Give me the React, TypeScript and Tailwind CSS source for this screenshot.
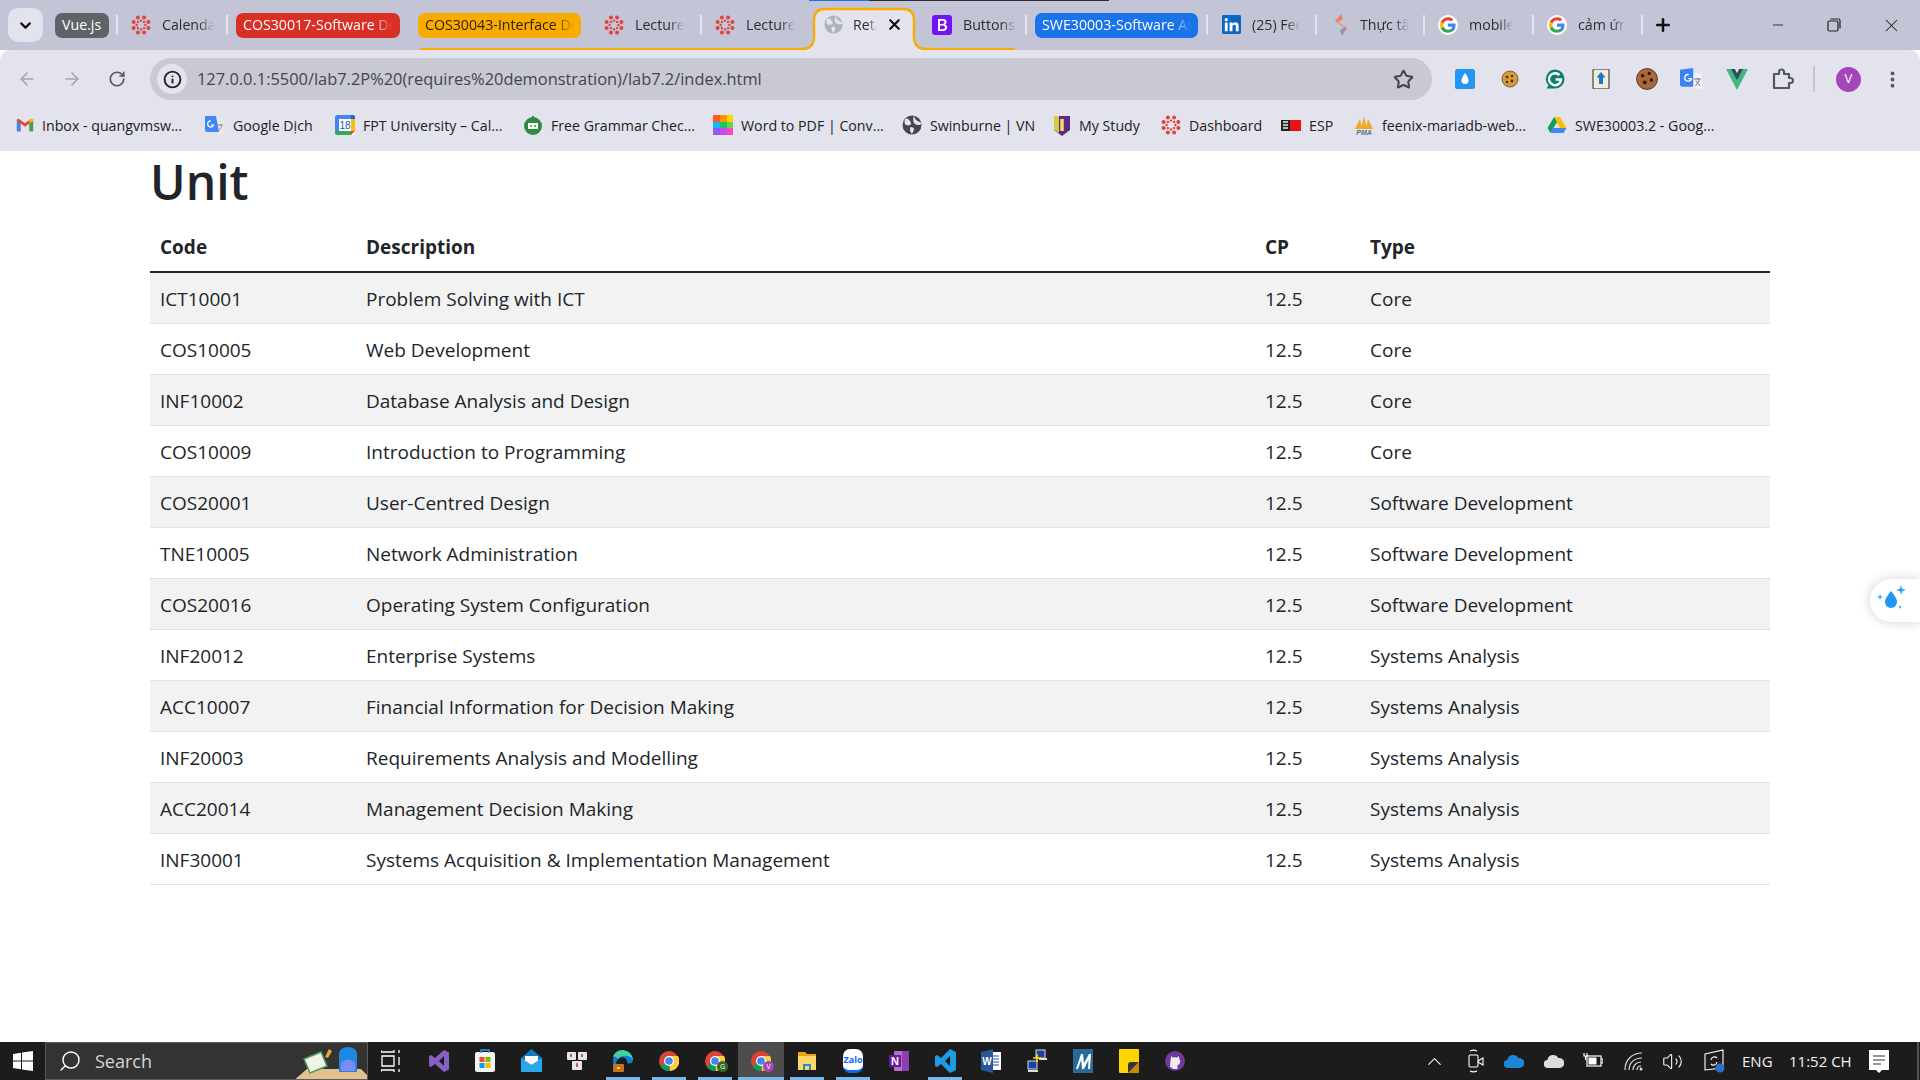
import React from "react";
import { ArrowLeft, ArrowRight, RotateCw, Star, EllipsisVertical, Info, ChevronDown, X, Plus, Minus, Search, ChevronUp, Volume2 } from "lucide-react";

const Box = ({ s = 20, children }: { s?: number; children: React.ReactNode }) => (
  <svg width={s} height={s} viewBox="0 0 20 20" className="shrink-0">{children}</svg>
);

const Canvas = ({ s = 20 }: { s?: number }) => {
  const dots = Array.from({ length: 8 }, (_, i) => (i * Math.PI) / 4 + Math.PI / 8);
  return (
    <Box s={s}>
      {dots.map((a, i) => (
        <circle key={i} cx={10 + 8 * Math.cos(a)} cy={10 + 8 * Math.sin(a)} r={2} fill="#e2403a" />
      ))}
      {dots.map((a, i) => (
        <circle key={"b" + i} cx={10 + 4.4 * Math.cos(a + Math.PI / 8)} cy={10 + 4.4 * Math.sin(a + Math.PI / 8)} r={1.2} fill="#e2403a" />
      ))}
    </Box>
  );
};

const GLogo = () => (
  <Box>
    <circle cx="10" cy="10" r="10" fill="#fff" />
    <g transform="translate(10 10) scale(1.3) translate(-10 -10)">
      <path d="M15.8 10.2c0-.5 0-.9-.1-1.3H10v2.4h3.3c-.2.8-.6 1.4-1.2 1.9v1.5h2c1.1-1.1 1.7-2.6 1.7-4.5z" fill="#4285f4" />
      <path d="M10 16c1.6 0 3-.5 4-1.5l-2-1.5c-.5.4-1.2.6-2 .6-1.6 0-2.9-1-3.4-2.4H4.5v1.6C5.5 14.7 7.6 16 10 16z" fill="#34a853" />
      <path d="M6.6 11.2c-.3-.8-.3-1.6 0-2.4V7.2H4.5c-.8 1.7-.8 3.8 0 5.6z" fill="#fbbc05" />
      <path d="M10 6.4c.9 0 1.7.3 2.3.9L14 5.5C12.9 4.5 11.5 4 10 4 7.6 4 5.5 5.3 4.5 7.2l2.1 1.6C7.1 7.4 8.4 6.4 10 6.4z" fill="#ea4335" />
    </g>
  </Box>
);

const Globe = ({ c = "#aeb1b8", s = 20 }: { c?: string; s?: number }) => (
  <Box s={s}>
    <circle cx="10" cy="10" r="9.5" fill={c} />
    <path d="M3 4c2-1 4 0 5 2s2 3 0 4-3 0-4 0-2-3-1-6zM12 1c1 2 1 3 2 4s3 1 5 3c0 2-1 2-3 2s-3-1-4-2-1-5 0-7zM9 12c2 0 3 1 3 2s-1 3-2 5c-1-1-2-3-2-4s0-3 1-3z" fill="#e2e3ec" />
  </Box>
);

const Chrome = ({ badge }: { badge?: string }) => (
  <span className="relative flex">
    <svg width="20" height="24" viewBox="0 0 20 24">
      <circle cx="10" cy="12" r="10" fill="#db4437" />
      <path d="M10 12 1.400 17a10 10 0 0 0 9.600 5z" fill="#0f9d58" />
      <path d="M10 7h8.900A10 10 0 0 1 11 22z" fill="#ffcd40" />
      <circle cx="10" cy="12" r="5" fill="#fff" />
      <circle cx="10" cy="12" r="3.800" fill="#4285f4" />
    </svg>
    {badge && (
      <span className={"absolute right-[-3px] bottom-[1px] h-[11px] w-[11px] rounded-full text-[7px] leading-[11px] text-center text-white " + (badge === "V" ? "bg-[#a445b8]" : "bg-[#33691e]")}>
        {badge}
      </span>
    )}
  </span>
);

const Sep = ({ cls }: { cls: string }) => <span className={"h-[20px] w-[2px] shrink-0 bg-[#e2e3ec] " + cls} />;

const Chip = ({ cls, text, fade }: { cls: string; text: string; fade?: boolean }) => (
  <div className={"h-[25px] shrink-0 rounded-[7px] px-[7px] text-[14.2px] leading-[24px] overflow-hidden whitespace-nowrap " + cls}>
    <div className={fade ? "overflow-hidden [mask-image:linear-gradient(to_right,black_86%,transparent_100%)]" : ""}>{text}</div>
  </div>
);

const TabT = ({ w, icon, text, cls = "" }: { w: string; icon: React.ReactNode; text: string; cls?: string }) => (
  <div className={"flex shrink-0 items-center gap-[11px] " + w + " " + cls}>
    {icon}
    <div className="flex-1 overflow-hidden whitespace-nowrap text-[14.2px] text-[#2c2d33] [mask-image:linear-gradient(to_right,black_70%,transparent_100%)]">{text}</div>
  </div>
);

const TabStrip = () => (
  <div className="relative flex h-[50px] shrink-0 items-center bg-[#c3c4d6] pl-[8px]">
    <div className="absolute left-[809px] top-0 h-[1px] w-[60px] bg-[#1a73e8]" />
    <div className="absolute left-[869px] top-0 h-[1px] w-[240px] bg-[#2c2c30]" />
    <div className="absolute bottom-0 left-[420px] h-[2px] w-[385px] bg-[#f9ab00]" />
    <div className="absolute bottom-0 left-[925px] h-[2px] w-[90px] bg-[#f9ab00]" />
    <div className="flex h-[34px] w-[35px] shrink-0 items-center justify-center rounded-[10px] bg-[#e2e3ec]">
      <ChevronDown size={17} strokeWidth={3} color="#111" />
    </div>
    <Chip cls="ml-[12px] w-[54px] bg-[#5f6368] text-white" text="Vue.js" />
    <Sep cls="ml-[7px]" />
    <TabT w="w-[83px] ml-[13px]" icon={<Canvas />} text="Calendar" />
    <Sep cls="ml-[12px]" />
    <Chip cls="ml-[8px] w-[164px] bg-[#d93025] text-white" text="COS30017-Software Development" fade />
    <Chip cls="ml-[18px] w-[163px] bg-[#f9ab00] text-[#2c2410]" text="COS30043-Interface Design" fade />
    <TabT w="w-[80px] ml-[23px]" icon={<Canvas />} text="Lecture" />
    <Sep cls="ml-[16px]" />
    <TabT w="w-[80px] ml-[13px]" icon={<Canvas />} text="Lecture" />
    <div className="relative ml-[19px] flex h-[50px] w-[100px] shrink-0 items-center">
      <svg className="absolute left-[-20px] top-0" width="140" height="50" viewBox="0 0 140 50">
        <path d="M0 49H8Q20 49 20 37V20Q20 9 31 9H109Q120 9 120 20V37Q120 49 132 49H140V50H0Z" fill="#e2e3ec" />
        <path d="M0 49H8Q20 49 20 37V20Q20 9 31 9H109Q120 9 120 20V37Q120 49 132 49H140" fill="none" stroke="#f9ab00" strokeWidth="2.4" />
      </svg>
      <div className="relative flex w-full items-center pl-[10px]">
        <Globe s={19} />
        <span className="ml-[10px] w-[24px] overflow-hidden whitespace-nowrap text-[14.2px] text-[#2c2d33] [mask-image:linear-gradient(to_right,black_60%,transparent_100%)]">Retake</span>
        <X size={17} strokeWidth={3} className="ml-[9px] text-[#111]" />
      </div>
    </div>
    <TabT
      w="w-[85px] ml-[18px]"
      icon={
        <Box>
          <rect width="20" height="20" rx="3" fill="#7411f5" />
          <path d="M6 4h5c2.400 0 3.600 1.200 3.600 2.900 0 1.200-.7 2.100-1.800 2.500 1.400.3 2.300 1.300 2.300 2.800 0 2.200-1.600 3.800-4.200 3.800H6zm2 1.800v3.100h2.500c1.300 0 2-.6 2-1.600s-.7-1.500-2-1.500zm0 4.800v3.600h2.600c1.600 0 2.400-.7 2.400-1.900s-.9-1.700-2.600-1.700z" fill="#fff" />
        </Box>
      }
      text="Buttons"
    />
    <Sep cls="ml-[8px]" />
    <Chip cls="ml-[8px] w-[163px] bg-[#1a73e8] text-white" text="SWE30003-Software Architecture" fade />
    <Sep cls="ml-[8px]" />
    <TabT
      w="w-[78px] ml-[14px]"
      icon={
        <Box s={19}>
          <rect width="20" height="20" rx="1.500" fill="#0a66c2" />
          <path d="M3 8h3v9H3zM4.500 3.200a1.700 1.700 0 1 1 0 3.400 1.700 1.700 0 0 1 0-3.400zM8 8h3v1.300c.5-.8 1.500-1.600 3-1.600 2.500 0 3.500 1.500 3.500 4V17h-3v-4.800c0-1.300-.4-2-1.500-2s-2 .8-2 2.300V17H8z" fill="#fff" />
        </Box>
      }
      text="(25) Feed"
    />
    <Sep cls="ml-[15px]" />
    <TabT
      w="w-[76px] ml-[16px]"
      icon={
        <svg width="16" height="24" viewBox="0 0 16 24" className="shrink-0">
          <path d="M8 1 2 8l9 6-4 3 2 6 5-8-9-6 5-3z" fill="#e9835c" />
          <path d="M4 9l8 5-5 4 2 4 4-7-9-6z" fill="#6b9fd6" opacity=".8" />
        </svg>
      }
      text="Thực tập"
    />
    <Sep cls="ml-[14px]" />
    <TabT w="w-[75px] ml-[13px]" icon={<GLogo />} text="mobile" />
    <Sep cls="ml-[19px]" />
    <TabT w="w-[79px] ml-[13px]" icon={<GLogo />} text="cảm ứng" />
    <Sep cls="ml-[15px]" />
    <Plus size={20} strokeWidth={3} className="ml-[10px] shrink-0 text-[#111]" />
    <div className="ml-auto flex items-center">
      <div className="flex w-[56px] justify-center"><Minus size={16} strokeWidth={1.3} className="text-[#222]" /></div>
      <div className="flex w-[56px] justify-center">
        <svg width="14" height="14" viewBox="0 0 14 14" fill="none" stroke="#222" strokeWidth="1.2">
          <rect x="1" y="3" width="10" height="10" rx="1.500" />
          <path d="M3.500 1H11.500a1.500 1.500 0 0 1 1.500 1.500V10.500" />
        </svg>
      </div>
      <div className="flex w-[58px] justify-center"><X size={21} strokeWidth={1.2} className="text-[#222]" /></div>
    </div>
  </div>
);

const Toolbar = () => (
  <div className="flex h-[55px] shrink-0 items-center rounded-t-[10px] bg-[#e2e3ec] pb-[3px] pt-[6px]">
    <div className="flex w-[150px] shrink-0 items-center pl-[17px] text-[#a4a6ae]">
      <ArrowLeft size={20} strokeWidth={2} />
      <ArrowRight size={20} strokeWidth={2} className="ml-[25px]" />
      <RotateCw size={18} strokeWidth={2.200} className="ml-[26px] text-[#55575e]" />
    </div>
    <div className="flex h-[42px] w-[1282px] shrink-0 items-center rounded-full bg-[#c9c9d3] pl-[7px] pr-[18px]">
      <div className="flex h-[30px] w-[30px] shrink-0 items-center justify-center rounded-full bg-[#e2e3ec]">
        <Info size={19} strokeWidth={2.400} className="text-[#222]" />
      </div>
      <div className="ml-[10px] whitespace-nowrap text-[16.400px] text-[#44454c]">127.0.0.1:5500/lab7.2P%20(requires%20demonstration)/lab7.2/index.html</div>
      <Star size={21} strokeWidth={2.300} className="ml-auto text-[#44454c]" />
    </div>
    <div className="flex flex-1 items-center">
      <div className="ml-[23px] flex w-[45px]">
        <Box>
          <rect width="20" height="20" rx="2.500" fill="#2196f3" />
          <path d="M10 4c2.400 3.400 3.500 5.300 3.500 7.500a3.500 3.500 0 0 1-7 0C6.500 9.300 7.600 7.400 10 4z" fill="#fff" />
        </Box>
      </div>
      <div className="flex w-[45px]">
        <Box>
          <circle cx="10" cy="10" r="8" fill="#d59a3b" stroke="#6b4a1c" strokeWidth=".8" />
          <circle cx="7" cy="8" r="1.300" fill="#4a2b0f" /><circle cx="12" cy="7" r="1.200" fill="#4a2b0f" /><circle cx="12" cy="12" r="1.400" fill="#4a2b0f" /><circle cx="7" cy="13" r="1.200" fill="#4a2b0f" />
        </Box>
      </div>
      <div className="flex w-[46px]">
        <Box>
          <path d="M10 .5a9.500 9.500 0 1 1 0 19H1.500l2-3A9.500 9.500 0 0 1 10 .5z" fill="#0b7f6f" />
          <path d="M14.500 6.200A6 6 0 1 0 16 10.500h-5.500" fill="none" stroke="#fff" strokeWidth="2.500" />
        </Box>
      </div>
      <div className="flex w-[45px]">
        <Box>
          <rect x="2" y="0" width="16" height="20" rx="2" fill="#f3edd7" stroke="#666" strokeWidth="1.500" />
          <path d="M10 3 14.500 8.500H12V15H8V8.500H5.500z" fill="#1976d2" />
        </Box>
      </div>
      <div className="flex w-[44px]">
        <Box s={22}>
          <circle cx="10" cy="10" r="9.500" fill="#a8683a" stroke="#4d2d15" strokeWidth=".8" />
          <circle cx="6" cy="7" r="1.600" fill="#2d1a0b" /><circle cx="12" cy="5" r="1.500" fill="#2d1a0b" /><circle cx="14" cy="11" r="1.600" fill="#2d1a0b" /><circle cx="8" cy="13" r="1.700" fill="#2d1a0b" />
        </Box>
      </div>
      <div className="flex w-[46px]">
        <Box s={22}>
          <path d="M9 5h10a1 1 0 0 1 1 1v13l-10-.5z" fill="#f1f1f1" />
          <path d="M0 1.500 12 0v17H2a2 2 0 0 1-2-2z" fill="#3b82f6" />
          <path d="M8 6a3 3 0 1 0 2.300 3.600H7.500" fill="none" stroke="#fff" strokeWidth="1.200" />
          <path d="M13 10h6M16 9v1M14 16c2-1 3-3 3.500-6M14.500 11.500c.8 2 2 3.500 4 4.500" fill="none" stroke="#666" strokeWidth=".8" />
        </Box>
      </div>
      <div className="flex w-[46px]">
        <Box s={22}>
          <path d="M0 1H8L10 5 12 1H20L10 20z" fill="#41b883" />
          <path d="M4.500 1H8L10 5 12 1H15.500L10 11z" fill="#35495e" />
        </Box>
      </div>
      <div className="flex w-[41px]">
        <svg width="22" height="22" viewBox="0 0 22 22" fill="none" stroke="#55575e" strokeWidth="2.200" strokeLinejoin="round">
          <path d="M2 6h5V4a2.500 2.500 0 0 1 5 0v2h5v4h1.500a2.500 2.500 0 0 1 0 5H17v5H2z" />
        </svg>
      </div>
      <div className="h-[26px] w-[2px] bg-[#c3c4d6]" />
      <div className="ml-[21px] flex h-[25px] w-[25px] items-center justify-center rounded-full bg-[#a445b8] text-[13px] text-white">V</div>
      <EllipsisVertical size={21} strokeWidth={2.400} className="ml-[21px] text-[#55575e]" />
    </div>
  </div>
);

const Bm = ({ w, icon, text }: { w: string; icon: React.ReactNode; text: string }) => (
  <div className={"flex shrink-0 items-center gap-[8px] whitespace-nowrap text-[14.200px] text-[#1f2024] " + w}>
    {icon}
    <span>{text}</span>
  </div>
);

const Bookmarks = () => (
  <div className="flex h-[46px] shrink-0 items-center bg-[#e2e3ec] pl-[16px] pb-[5px]">
    <Bm
      w="w-[189px]"
      icon={
        <Box s={18}>
          <path d="M1 4v13h4V8l5 4 5-4v9h4V4l-2-1-7 5-7-5z" fill="#ea4335" />
          <path d="M1 17V5l4 3v9z" fill="#4285f4" />
          <path d="M19 17V5l-4 3v9z" fill="#34a853" />
          <path d="M15 8V4l2-1 2 1v2z" fill="#fbbc05" />
        </Box>
      }
      text="Inbox - quangvmsw..."
    />
    <Bm
      w="w-[130px]"
      icon={
        <Box>
          <path d="M9 4h10a1 1 0 0 1 1 1v14H10z" fill="#e8e8e8" />
          <path d="M0 1h11l3 16H2a2 2 0 0 1-2-2z" fill="#4285f4" />
          <path d="M6 6a3 3 0 1 0 2.500 4H6" fill="none" stroke="#fff" strokeWidth="1.200" />
          <path d="M13 10h5M15 9v1M14 15c1.500-1 2.500-2.500 3-5" fill="none" stroke="#777" strokeWidth=".8" />
        </Box>
      }
      text="Google Dịch"
    />
    <Bm
      w="w-[188px]"
      icon={
        <Box>
          <rect width="20" height="20" rx="2" fill="#fff" />
          <path d="M0 2a2 2 0 0 1 2-2h14v4H4v12H0z" fill="#4285f4" />
          <path d="M0 16h16v4H2a2 2 0 0 1-2-2z" fill="#34a853" />
          <path d="M16 0h2a2 2 0 0 1 2 2v2h-4z" fill="#1967d2" />
          <path d="M16 4h4v12h-4z" fill="#fbbc05" />
          <path d="M16 16h4l-4 4z" fill="#ea4335" />
          <text x="10" y="14" fontSize="10" fontFamily="Liberation Sans" textAnchor="middle" fill="#1a56c4">18</text>
        </Box>
      }
      text="FPT University – Cal..."
    />
    <Bm
      w="w-[190px]"
      icon={
        <Box>
          <circle cx="10" cy="11" r="9" fill="#2e8b45" />
          <path d="M5 8h10v6H5z" fill="#fff" />
          <circle cx="8" cy="11" r="1" fill="#2e8b45" /><circle cx="12" cy="11" r="1" fill="#2e8b45" />
          <path d="M10 1v6" stroke="#2e8b45" strokeWidth="2" />
        </Box>
      }
      text="Free Grammar Chec..."
    />
    <Bm
      w="w-[189px]"
      icon={
        <Box>
          <rect x="0" y="0" width="7" height="7" fill="#ff5a1f" /><rect x="7" y="0" width="7" height="7" fill="#ff9800" /><rect x="14" y="0" width="6" height="7" fill="#ffd600" />
          <rect x="0" y="7" width="7" height="6" fill="#18b6f6" /><rect x="7" y="7" width="7" height="6" fill="#21c45d" /><rect x="14" y="7" width="6" height="6" fill="#6bd14f" />
          <rect x="0" y="13" width="7" height="7" fill="#8b5cf6" /><rect x="7" y="13" width="7" height="7" fill="#c94cf0" /><rect x="14" y="13" width="6" height="7" fill="#f04cc0" />
        </Box>
      }
      text="Word to PDF | Conv..."
    />
    <Bm w="w-[151px]" icon={<Globe c="#45474c" />} text="Swinburne | VN" />
    <Bm
      w="w-[108px]"
      icon={
        <svg width="18" height="22" viewBox="0 0 18 22" className="shrink-0">
          <path d="M1 1h16v14l-8 6-8-6z" fill="#5b2a86" />
          <path d="M1 1h5v17l-5-3z" fill="#d8c84a" />
          <path d="M9 4v12" stroke="#f6e05e" strokeWidth="3.500" />
        </svg>
      }
      text="My Study"
    />
    <Bm w="w-[120px]" icon={<Canvas />} text="Dashboard" />
    <Bm
      w="w-[73px]"
      icon={
        <svg width="20" height="11" viewBox="0 0 20 11" className="shrink-0">
          <rect width="9" height="11" fill="#222" />
          <rect x="9" width="11" height="11" fill="#ee1111" />
          <path d="M2 2h5M2 5h5M2 8h5" stroke="#eee" strokeWidth="1.300" />
        </svg>
      }
      text="ESP"
    />
    <Bm
      w="w-[193px]"
      icon={
        <Box>
          <path d="M1 14 6 4l2 10zM7 14l3-13 3 13zM12 14l2-10 5 10z" fill="#f5a623" />
          <text x="10" y="20" fontSize="7" fontStyle="italic" fontWeight="700" fontFamily="Liberation Sans" textAnchor="middle" fill="#5c6f92">PMA</text>
        </Box>
      }
      text="feenix-mariadb-web..."
    />
    <Bm
      w="w-[190px]"
      icon={
        <Box>
          <path d="M7 2h6l6.500 11h-6.500z" fill="#fbbc04" />
          <path d="M7 2 0.500 13 3.500 18 10 7z" fill="#0f9d58" />
          <path d="M3.500 18h13l3-5H6.500z" fill="#4285f4" />
        </Box>
      }
      text="SWE30003.2 - Goog..."
    />
  </div>
);

type Row = [string, string, string, string];
const rows: Row[] = [
  ["ICT10001", "Problem Solving with ICT", "12.5", "Core"],
  ["COS10005", "Web Development", "12.5", "Core"],
  ["INF10002", "Database Analysis and Design", "12.5", "Core"],
  ["COS10009", "Introduction to Programming", "12.5", "Core"],
  ["COS20001", "User-Centred Design", "12.5", "Software Development"],
  ["TNE10005", "Network Administration", "12.5", "Software Development"],
  ["COS20016", "Operating System Configuration", "12.5", "Software Development"],
  ["INF20012", "Enterprise Systems", "12.5", "Systems Analysis"],
  ["ACC10007", "Financial Information for Decision Making", "12.5", "Systems Analysis"],
  ["INF20003", "Requirements Analysis and Modelling", "12.5", "Systems Analysis"],
  ["ACC20014", "Management Decision Making", "12.5", "Systems Analysis"],
  ["INF30001", "Systems Acquisition & Implementation Management", "12.5", "Systems Analysis"],
];

const Page = () => (
  <main className="relative flex-1 overflow-hidden bg-white pt-[1px] px-[150px] text-[#212529]">
    <h1 className="mb-[10px] text-[48px] font-semibold leading-[60px]">Unit</h1>
    <table className="w-[1620px] table-fixed border-collapse text-[19px] leading-[30px]">
      <colgroup>
        <col className="w-[206px]" />
        <col className="w-[899px]" />
        <col className="w-[105px]" />
        <col className="w-[410px]" />
      </colgroup>
      <thead>
        <tr className="border-b-[2.500px] border-[#212529] text-left">
          <th className="px-[10px] pt-[10px] pb-[9px] font-bold">Code</th>
          <th className="px-[10px] pt-[10px] pb-[9px] font-bold">Description</th>
          <th className="px-[10px] pt-[10px] pb-[9px] font-bold">CP</th>
          <th className="px-[10px] pt-[10px] pb-[9px] font-bold">Type</th>
        </tr>
      </thead>
      <tbody>
        {rows.map((r, i) => (
          <tr key={r[0]} className={"border-b border-[#dee2e6] " + (i % 2 === 0 ? "bg-[#f2f2f2]" : "bg-white")}>
            {r.map((c, j) => (
              <td key={j} className="px-[10px] pt-[11px] pb-[9px]">{c}</td>
            ))}
          </tr>
        ))}
      </tbody>
    </table>
    <div className="absolute right-0 top-[428px] flex h-[43px] w-[50px] items-center justify-center rounded-l-full bg-white pr-[6px] shadow-[0_0_12px_rgba(0,0,0,0.18)]">
      <svg width="34" height="34" viewBox="0 0 34 34">
        <path d="M16 7c4 5 6 8 6 11a6 6 0 0 1-12 0c0-3 2-6 6-11z" fill="#2196f3" />
        <path d="M26 1l1.200 3.800L31 6l-3.800 1.200L26 11l-1.200-3.800L21 6l3.800-1.200zM5 10l.8 2.200L8 13l-2.200.8L5 16l-.8-2.200L2 13l2.200-.8zM25 21l.6 1.400L27 23l-1.400.6L25 25l-.6-1.400L23 23l1.400-.6z" fill="#2ea3f2" />
      </svg>
    </div>
  </main>
);

const Cell = ({ children, on, active }: { children?: React.ReactNode; on?: boolean; active?: boolean }) => (
  <div className={"relative flex h-full w-[46px] shrink-0 items-center justify-center " + (active ? "bg-[#4d4d4d]" : "")}>
    {children}
    {on && <span className={"absolute bottom-0 h-[3px] bg-[#76b9ed] " + (active ? "left-0 right-0" : "left-[6px] right-[6px]")} />}
  </div>
);

const Taskbar = () => (
  <div className="flex h-[38px] shrink-0 items-center bg-[#1c1c1c]">
    <div className="flex h-full w-[45px] shrink-0 items-center justify-center">
      <svg width="20" height="20" viewBox="0 0 20 20" fill="#fff"><path d="M0 3l8-1.200V9.500H0zM9 1.600 20 0v9.500H9zM0 10.500h8v7.700L0 17zM9 10.500h11V20L9 18.400z" /></svg>
    </div>
    <div className="relative mr-[2px] flex h-full w-[323px] shrink-0 items-center overflow-hidden border border-[#5a5a5a] bg-[#333333] pl-[12px]">
      <Search size={24} strokeWidth={1.400} className="-scale-x-100 text-white" />
      <span className="ml-[13px] text-[18px] text-[#d6d6d6]">Search</span>
      <svg className="absolute right-0 top-0" width="80" height="38" viewBox="0 0 80 38">
        <path d="M6 38 20 26H74L80 32V38z" fill="#e3c18f" />
        <path d="M17 16 34 9 40 23 23 30z" fill="#eef3e2" stroke="#4d9a5f" strokeWidth="1.500" />
        <path d="M38 14 42 6l3 2-4 7z" fill="#f5a623" />
        <path d="M52 29V12Q52 4 61 4T70 12V29z" fill="#1e88e5" />
        <path d="M54 28V20Q61 13 68 20V28z" fill="#7e8cf2" />
      </svg>
    </div>
    <Cell>
      <svg width="20" height="24" viewBox="0 0 20 24" fill="none" stroke="#fff" strokeWidth="1.300" className="-translate-x-[2px]"><path d="M0 1v2h13V1M1 7h12v10H1zM0 23v-2h13v2M18 1v3M18 8v8M18 20v3" /></svg>
    </Cell>
    <Cell>
      <svg width="22" height="24" viewBox="0 0 22 24"><path d="M16 1l5 2.500v17L16 23 7 15l-4 3-2-1V7l2-1 4 3zM16 7l-5 5 5 5z" fill="#8661c5" fillRule="evenodd" /></svg>
    </Cell>
    <Cell>
      <svg width="20" height="24" viewBox="0 0 20 24">
        <rect y="3" width="20" height="20" rx="2" fill="#f3f3f3" />
        <path d="M6 4V1h8v3" fill="none" stroke="#1fa8e0" strokeWidth="1.300" />
        <rect x="4.500" y="8" width="5" height="5" fill="#f25022" /><rect x="10.500" y="8" width="5" height="5" fill="#7fba00" /><rect x="4.500" y="14" width="5" height="5" fill="#00a4ef" /><rect x="10.500" y="14" width="5" height="5" fill="#ffb900" />
      </svg>
    </Cell>
    <Cell>
      <svg width="21" height="24" viewBox="0 0 21 24">
        <path d="M0 9 10.500 0 21 9v14H0z" fill="#0e7bc8" />
        <path d="M4 7h13v5l-6.500 4L4 12z" fill="#fff" />
        <path d="M0 9l10.500 7L21 9v14H0z" fill="#28a8ea" />
      </svg>
    </Cell>
    <Cell>
      <svg width="20" height="20" viewBox="0 0 20 20">
        <rect x="0" y="1" width="9" height="8" rx="1" fill="#e7e7e7" /><rect x="11" y="1" width="9" height="8" rx="1" fill="#e7e7e7" /><rect x="5" y="10" width="10" height="9" rx="1" fill="#e7e7e7" />
        <path d="M4 3v3M15 3v3M10 12v4" stroke="#c33" strokeWidth="1.600" />
      </svg>
    </Cell>
    <Cell on>
      <svg width="22" height="24" viewBox="0 0 22 24">
        <path d="M1 12a10 10 0 0 1 20-1c0 3-3 4-6 3 1-5-5-8-9-4-3 3-2 8 2 10-4 0-7-3-7-8z" fill="#0f7fd4" />
        <path d="M6 10c4-5 13-4 15 1 0-6-6-10-11-10-4 0-8 3-9 7 1-1 3-1 5 2z" fill="#3fd2a4" />
        <rect x="1" y="15" width="11" height="8" rx="1" fill="#c8741f" />
        <rect x="5" y="18" width="3" height="2" fill="#fbd14b" />
      </svg>
    </Cell>
    <Cell on><Chrome /></Cell>
    <Cell on><Chrome badge="G" /></Cell>
    <Cell on active><Chrome badge="V" /></Cell>
    <Cell on>
      <svg width="20" height="20" viewBox="0 0 20 20">
        <path d="M1 1h7l2 2h9v3H1z" fill="#e8a317" />
        <path d="M1 5h18v14H1z" fill="#ffd768" />
        <path d="M6 13h8v6h-2v-4H8v4H6z" fill="#2b88d8" />
      </svg>
    </Cell>
    <Cell on>
      <div className="flex h-[24px] w-[20px] items-center justify-center rounded-[7px] border-b-[3px] border-[#0a68ff] bg-white text-[9px] font-bold text-[#0a68ff]">Zalo</div>
    </Cell>
    <Cell>
      <svg width="20" height="22" viewBox="0 0 20 22">
        <rect x="5" y="1" width="15" height="20" rx="1" fill="#b46fd0" />
        <path d="M13 1h7v20h-7z" fill="#8c3fb0" />
        <rect x="0" y="5" width="12" height="12" fill="#6a1b9a" />
        <text x="6" y="15" textAnchor="middle" fontSize="11" fontWeight="700" fontFamily="Liberation Sans" fill="#fff">N</text>
      </svg>
    </Cell>
    <Cell on>
      <svg width="21" height="24" viewBox="0 0 21 24">
        <path d="M15 0l6 3v18l-6 3-9-9-4 3-2-1V7l2-1 4 3zM15 7l-5 5 5 5z" fill="#1f9be6" fillRule="evenodd" />
      </svg>
    </Cell>
    <Cell>
      <svg width="20" height="24" viewBox="0 0 20 24">
        <rect x="7" y="3" width="13" height="18" fill="#fff" />
        <path d="M11 7h7M11 10h7M11 13h7M11 16h7" stroke="#2b579a" strokeWidth="1.200" />
        <path d="M0 3 12 0v24L0 21z" fill="#2b579a" />
        <text x="6" y="16" textAnchor="middle" fontSize="10" fontWeight="700" fontFamily="Liberation Sans" fill="#fff">W</text>
      </svg>
    </Cell>
    <Cell>
      <svg width="20" height="24" viewBox="0 0 20 24">
        <rect x="9" y="1" width="9" height="8" fill="#1d3fa8" stroke="#ddd" />
        <rect x="1" y="12" width="9" height="8" fill="#1d3fa8" stroke="#ddd" />
        <path d="M1 22h10M12 10h8" stroke="#ddd" strokeWidth="2" />
        <path d="M6 9h8M10 5v8" stroke="#ffe000" strokeWidth="1.600" />
      </svg>
    </Cell>
    <Cell>
      <svg width="20" height="24" viewBox="0 0 20 24">
        <rect width="20" height="24" fill="#2a6a9a" />
        <path d="M3 20 8 5h2l1 9 5-9h2l-1 15h-2l.5-9-4.500 9h-2l-.8-9L5 20z" fill="#fff" />
      </svg>
    </Cell>
    <Cell>
      <svg width="20" height="24" viewBox="0 0 20 24">
        <rect width="20" height="24" rx="1" fill="#ffd400" />
        <path d="M20 13v11H9z" fill="#c98a00" />
        <path d="M20 13 9 24v-8a3 3 0 0 1 3-3z" fill="#333" />
      </svg>
    </Cell>
    <Cell>
      <svg width="20" height="20" viewBox="0 0 20 20">
        <circle cx="10" cy="10" r="10" fill="#6f3a9c" />
        <path d="M6 5l2 1.500a7 7 0 0 1 4 0L14 5l.4 3a4 4 0 0 1 .8 2.500C15.200 13 13.500 14 12 14.300c.4.4.6 1 .6 1.700v2H7.400v-1.400C5.500 17 5 15.500 5 15.500" fill="#eee" />
      </svg>
    </Cell>
    <div className="ml-auto flex h-full items-center text-[#f2f2f2]">
      <ChevronUp size={23} strokeWidth={1.200} />
      <span className="ml-[22px] flex">
        <svg width="16" height="24" viewBox="0 0 16 24" fill="none" stroke="#fff" strokeWidth="1.100"><rect x="1" y="6" width="9" height="12" rx="1.500" /><path d="M10 12l5-3v7l-5-3M2 2c2-1 5-1 7 0M2 22c2 1 5 1 7 0" /></svg>
      </span>
      <span className="ml-[20px] flex">
        <svg width="20" height="14" viewBox="0 0 20 14"><path d="M4 14a4 4 0 0 1-.6-8A6 6 0 0 1 14.500 4 4.500 4.500 0 0 1 16 14z" fill="#1b86d8" /></svg>
      </span>
      <span className="ml-[20px] flex">
        <svg width="20" height="14" viewBox="0 0 20 14"><path d="M4 14a4 4 0 0 1-.6-8A6 6 0 0 1 14.500 4 4.500 4.500 0 0 1 16 14z" fill="#dcdcdc" /></svg>
      </span>
      <span className="ml-[19px] flex">
        <svg width="20" height="18" viewBox="0 0 20 18" fill="none" stroke="#fff" strokeWidth="1.200"><rect x="4" y="4" width="14" height="10" /><rect x="5.500" y="5.500" width="8" height="7" fill="#fff" stroke="none" /><path d="M18 7h2v4h-2M1 1v3h3V1M2.500 4v4" /></svg>
      </span>
      <span className="ml-[21px] flex">
        <svg width="20" height="20" viewBox="0 0 20 20" fill="none" stroke="#ddd" strokeWidth="1.200">
          <path d="M1 19C1 9 8 2 18 2M5 19c0-7 5-12 13-12M9 19c0-4 3-8 8-8M13 19c0-2 1-4 4-4" />
          <circle cx="17" cy="18" r="1.500" fill="#ddd" stroke="none" />
        </svg>
      </span>
      <span className="ml-[18px] flex"><Volume2 size={21} strokeWidth={1.300} /></span>
      <span className="ml-[21px] flex">
        <svg width="21" height="24" viewBox="0 0 21 24" fill="none" stroke="#fff" strokeWidth="1.100">
          <path d="M1 5 19 1v18L1 21z" />
          <path d="M7 11a3.500 3.500 0 0 1 6-2M13 13a3.500 3.500 0 0 1-6 2" />
          <circle cx="16" cy="19" r="4.500" fill="#2a6fd1" stroke="none" />
        </svg>
      </span>
      <span className="ml-[17px] w-[28px] whitespace-nowrap text-[15px]">ENG</span>
      <span className="ml-[19px] w-[57px] whitespace-nowrap text-[15px]">11:52 CH</span>
      <span className="ml-[23px] flex">
        <svg width="20" height="24" viewBox="0 0 20 24"><path d="M0 1h20v20h-7l-3 3-3-3H0z" fill="#fff" /><path d="M4 7h12M4 11h12M4 15h8" stroke="#333" strokeWidth="1.100" /></svg>
      </span>
      <span className="ml-[28px] h-full w-[2px] bg-[#555]" />
      <span className="w-[1px]" />
    </div>
  </div>
);

export default function App() {
  return (
    <div className="flex h-screen w-full flex-col overflow-hidden [font-family:'Open_Sans','Noto_Sans',sans-serif]">
      <TabStrip />
      <Toolbar />
      <Bookmarks />
      <Page />
      <Taskbar />
    </div>
  );
}
